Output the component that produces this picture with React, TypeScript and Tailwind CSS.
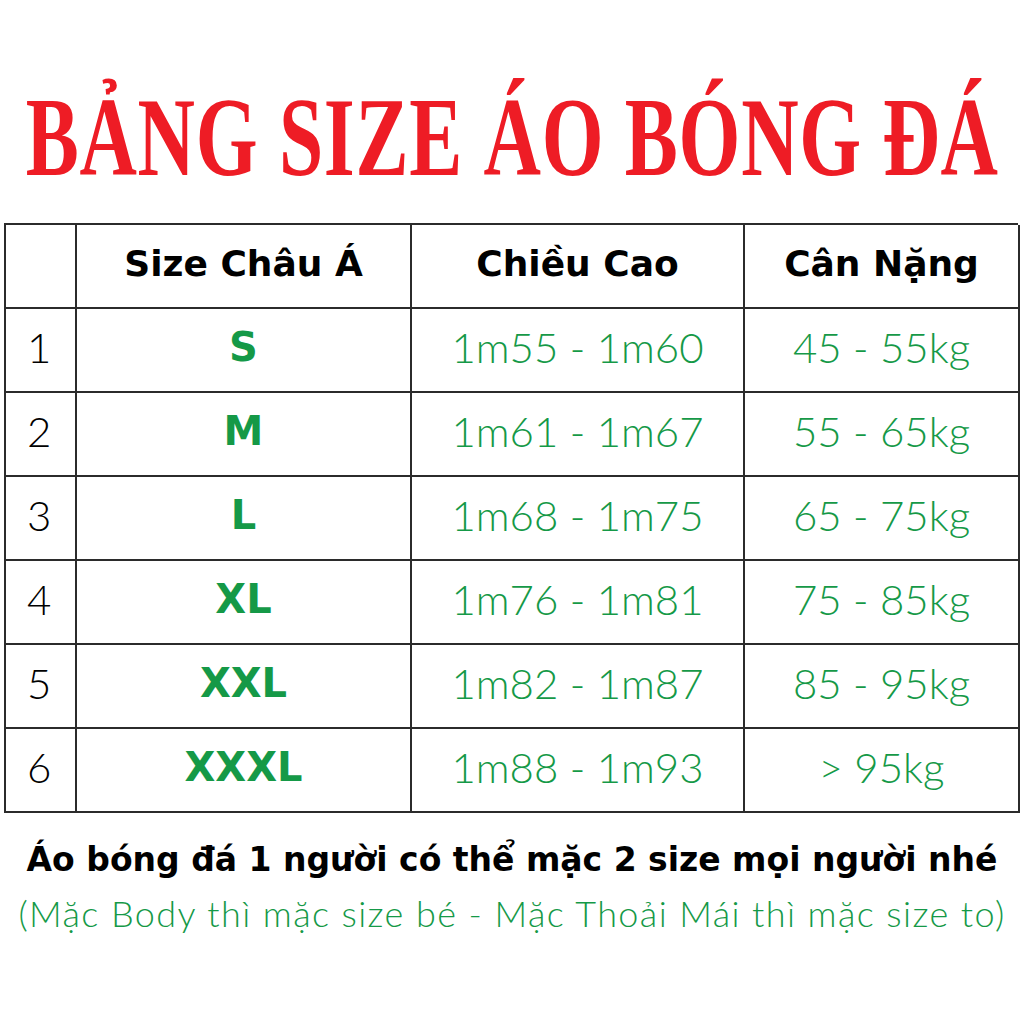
const rows = [
  { n: "1", size: "S", height: "1m55 - 1m60", weight: "45 - 55kg" },
  { n: "2", size: "M", height: "1m61 - 1m67", weight: "55 - 65kg" },
  { n: "3", size: "L", height: "1m68 - 1m75", weight: "65 - 75kg" },
  { n: "4", size: "XL", height: "1m76 - 1m81", weight: "75 - 85kg" },
  { n: "5", size: "XXL", height: "1m82 - 1m87", weight: "85 - 95kg" },
  { n: "6", size: "XXXL", height: "1m88 - 1m93", weight: "> 95kg" },
];

const cell = "h-[84px] border-r-2 border-b-2 border-[#2b2b2b] flex items-center";

export default function App() {
  return (
    <div className="w-[1024px] h-[1024px] bg-white font-['Lato',sans-serif] overflow-hidden">
      {/* Title */}
      <div className="h-[223px] flex items-center justify-center pt-[50px]">
        <h1 className="font-['Liberation_Serif',serif] font-bold text-[#ee1c25] text-[112px] leading-none whitespace-nowrap scale-x-[0.71] tracking-[1px]">
          BẢNG SIZE ÁO BÓNG ĐÁ
        </h1>
      </div>

      {/* Table */}
      <div className="ml-[4px] w-[1014px] grid grid-cols-[71px_335px_333px_275px] border-t-2 border-l-2 border-[#2b2b2b]">
        <div className={cell} />
        <div className={`${cell} justify-center pb-[4px] font-['DejaVu_Sans',sans-serif] text-[36px] font-bold text-black`}>
          Size Châu Á
        </div>
        <div className={`${cell} justify-center pb-[4px] font-['DejaVu_Sans',sans-serif] text-[36px] font-bold text-black`}>
          Chiều Cao
        </div>
        <div className={`${cell} justify-center pb-[4px] font-['DejaVu_Sans',sans-serif] text-[36px] font-bold text-black`}>
          Cân Nặng
        </div>
        {rows.map((r) => (
          <div key={r.n} className="contents">
            <div className={`${cell} pl-[21px] pb-[6px] text-[42px] font-light text-black`}>{r.n}</div>
            <div className={`${cell} justify-center pb-[6px] font-['DejaVu_Sans',sans-serif] text-[40px] font-bold text-[#159947]`}>
              {r.size}
            </div>
            <div className={`${cell} justify-center pb-[6px] text-[42px] font-light text-[#159947]`}>{r.height}</div>
            <div className={`${cell} justify-center pb-[6px] text-[42px] font-light text-[#159947]`}>{r.weight}</div>
          </div>
        ))}
      </div>

      {/* Footer */}
      <div className="mt-[24px] flex flex-col items-center">
        <p className="font-['DejaVu_Sans',sans-serif] text-[33px] font-bold text-black leading-[46px] whitespace-nowrap">
          Áo bóng đá 1 người có thể mặc 2 size mọi người nhé
        </p>
        <p className="mt-[8px] text-[36px] font-light text-[#159947] leading-[44px] whitespace-nowrap tracking-[1.4px]">
          (Mặc Body thì mặc size bé - Mặc Thoải Mái thì mặc size to)
        </p>
      </div>
    </div>
  );
}
